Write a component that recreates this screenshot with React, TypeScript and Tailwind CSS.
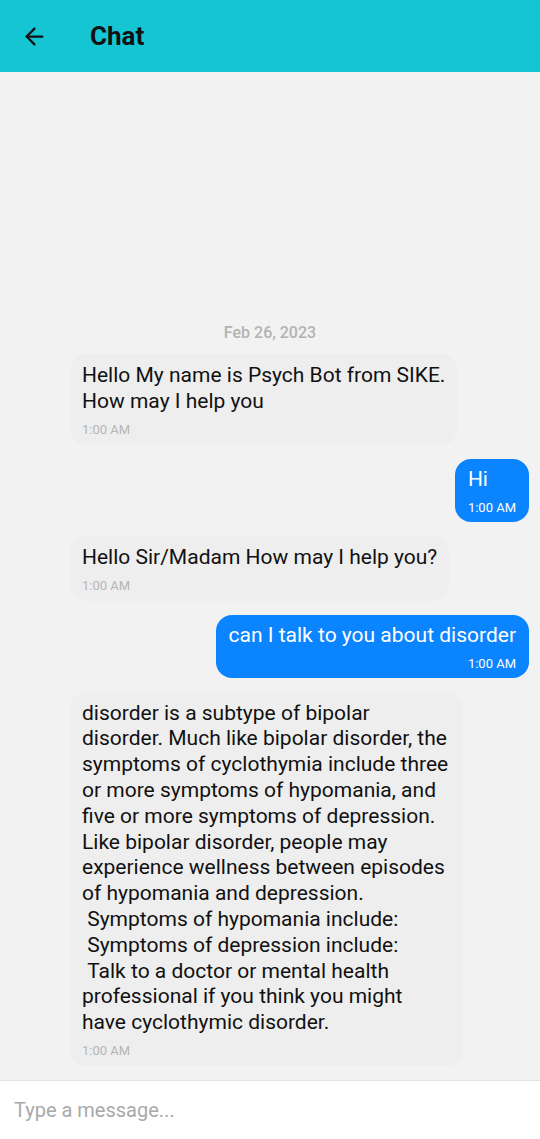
import React from "react";
import { ArrowLeft } from "lucide-react";

type Msg = { from: "bot" | "me"; text: string; time: string };

const messages: Msg[] = [
  { from: "bot", text: "Hello My name is Psych Bot from SIKE.\nHow may I help you", time: "1:00 AM" },
  { from: "me", text: "Hi", time: "1:00 AM" },
  { from: "bot", text: "Hello Sir/Madam How may I help you?", time: "1:00 AM" },
  { from: "me", text: "can I talk to you about disorder", time: "1:00 AM" },
  {
    from: "bot",
    text:
      "disorder is a subtype of bipolar disorder. Much like bipolar disorder, the symptoms of cyclothymia include three or more symptoms of hypomania, and five or more symptoms of depression. Like bipolar disorder, people may experience wellness between episodes of hypomania and depression.\n Symptoms of hypomania include:\n Symptoms of depression include:\n Talk to a doctor or mental health professional if you think you might have cyclothymic disorder.",
    time: "1:00 AM",
  },
];

const Bubble = ({ msg }: { msg: Msg }) => {
  if (msg.from === "me") {
    return (
      <div className="flex justify-end pr-[11px]">
        <div className="bg-[#0a84ff] text-white rounded-[16px] px-[13px] pt-[7px] pb-[6px] flex flex-col">
          <p className="text-[21px] leading-[26px] whitespace-pre-wrap">{msg.text}</p>
          <span className="text-[13px] leading-[16px] mt-[8px] self-end">{msg.time}</span>
        </div>
      </div>
    );
  }
  return (
    <div className="flex justify-start pl-[70px]">
      <div className="bg-[#eeeeee] rounded-[16px] px-[12px] pt-[9px] pb-[7px] max-w-[393px]">
        <p className="text-[21px] leading-[25.8px] text-[#111] whitespace-pre-wrap">{msg.text}</p>
        <span className="block text-[13px] leading-[16px] mt-[7px] text-[#b5b5b5]">{msg.time}</span>
      </div>
    </div>
  );
};

export default function App() {
  return (
    <div className="h-screen flex flex-col bg-[#f2f2f2]" style={{ fontFamily: "Roboto, 'Noto Sans', sans-serif" }}>
      {/* header */}
      <div className="h-[72px] shrink-0 bg-[#16c5d3] flex items-center px-[21px]">
        <ArrowLeft size={27} strokeWidth={2} className="text-[#111]" />
        <h1 className="ml-[42px] text-[26px] font-bold text-[#111]">Chat</h1>
      </div>

      {/* messages */}
      <div className="flex-1 flex flex-col justify-end pb-[14px]">
        <div className="text-center text-[16px] leading-[20px] font-medium text-[#b3b3b3] mb-[11px]">Feb 26, 2023</div>
        <div className="flex flex-col gap-[14px]">
          {messages.map((m, i) => (
            <Bubble key={i} msg={m} />
          ))}
        </div>
      </div>

      {/* input */}
      <div className="h-[59px] shrink-0 bg-white border-t border-[#e2e2e2] flex items-center px-[14px]">
        <input
          className="w-full outline-none text-[20px] text-[#222] placeholder:text-[#a9a9a9] bg-transparent"
          placeholder="Type a message..."
        />
      </div>
    </div>
  );
}
